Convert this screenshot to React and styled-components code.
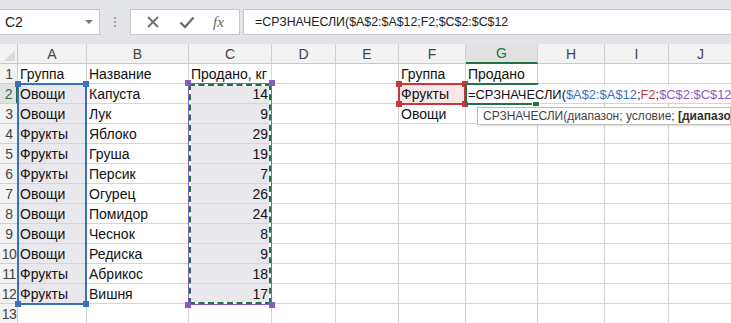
import React from 'react';
import styled, { createGlobalStyle } from 'styled-components';

////////////////////////////////////////////////////////////////////////////
const GlobalStyle = createGlobalStyle`
  html, body {
    margin: 0;
    padding: 0;
    background: #ffffff;
    overflow: hidden;
  }
  * { box-sizing: border-box; }
`;

const ROW_HEAD = 18;
const ROW_H = 20;
const COLS = [
  { key: 'A', w: 69 },
  { key: 'B', w: 102 },
  { key: 'C', w: 83 },
  { key: 'D', w: 64 },
  { key: 'E', w: 63 },
  { key: 'F', w: 67 },
  { key: 'G', w: 72 },
  { key: 'H', w: 67 },
  { key: 'I', w: 64 },
  { key: 'J', w: 64 },
];

const DATA = [
  { A: 'Группа', B: 'Название', C: 'Продано, кг', F: 'Группа', G: 'Продано' },
  { A: 'Овощи', B: 'Капуста', C: 14, F: 'Фрукты' },
  { A: 'Овощи', B: 'Лук', C: 9, F: 'Овощи' },
  { A: 'Фрукты', B: 'Яблоко', C: 29 },
  { A: 'Фрукты', B: 'Груша', C: 19 },
  { A: 'Фрукты', B: 'Персик', C: 7 },
  { A: 'Овощи', B: 'Огурец', C: 26 },
  { A: 'Овощи', B: 'Помидор', C: 24 },
  { A: 'Овощи', B: 'Чеснок', C: 8 },
  { A: 'Овощи', B: 'Редиска', C: 9 },
  { A: 'Фрукты', B: 'Абрикос', C: 18 },
  { A: 'Фрукты', B: 'Вишня', C: 17 },
  {},
];

// левый край колонки внутри листа
const colX = (key) => {
  let x = ROW_HEAD;
  for (const c of COLS) {
    if (c.key === key) return x;
    x += c.w;
  }
  return x;
};
const colW = (key) => COLS.find((c) => c.key === key).w;
const rowY = (n) => ROW_H * n; // верх строки n (0 = заголовки)

const GREEN = '#217346';
const BLUE = '#3b6fc4';
const RED = '#c9363f';
const PURPLE = '#8a5bbf';

////////////////////////////////////////////////////////////////////////////
const Page = styled.div`
  width: 731px;
  height: 323px;
  overflow: hidden;
  font-family: "Liberation Sans", Arial, sans-serif;
`;

const Toolbar = styled.div`
  height: 44px;
  background: #e2e4e7;
  display: flex;
  align-items: flex-start;
  padding-top: 9px;
`;

const NameBox = styled.div`
  width: 100px;
  height: 26px;
  background: #fff;
  border: 1px solid #c6c6c6;
  border-left: none;
  display: flex;
  align-items: center;
  justify-content: space-between;
  padding: 0 6px 0 5px;
  font-size: 14px;
  color: #222;
`;

const DropArrow = styled.span`
  width: 0;
  height: 0;
  border-left: 4px solid transparent;
  border-right: 4px solid transparent;
  border-top: 4px solid #777;
`;

const Grip = styled.div`
  width: 30px;
  height: 26px;
  display: flex;
  flex-direction: column;
  align-items: center;
  justify-content: center;
  gap: 2px;

  span {
    width: 2px;
    height: 2px;
    background: #a5a5a5;
  }
`;

const FxButtons = styled.div`
  width: 110px;
  height: 26px;
  background: #fff;
  border: 1px solid #c6c6c6;
  display: flex;
  align-items: center;
  justify-content: space-around;
  padding: 0 6px;
`;

const FxLabel = styled.span`
  font-family: "Liberation Serif", serif;
  font-style: italic;
  font-size: 15px;
  color: #666;
`;

const FormulaInput = styled.div`
  flex: 1;
  margin-left: 3px;
  height: 26px;
  background: #fff;
  border: 1px solid #c6c6c6;
  border-right: none;
  display: flex;
  align-items: center;
  padding-left: 11px;
  font-size: 12.4px;
  color: #222;
  white-space: nowrap;
`;

const Sheet = styled.div`
  position: relative;
  display: grid;
  grid-template-columns: ${ROW_HEAD}px ${COLS.map((c) => c.w + 'px').join(' ')};
  grid-auto-rows: ${ROW_H}px;
`;

const Corner = styled.div`
  position: relative;
  background: #f3f3f3;
  border-right: 1px solid #c8c8c8;
  border-bottom: 1px solid #c8c8c8;

  &::after {
    content: '';
    position: absolute;
    right: 2px;
    bottom: 2px;
    border-left: 11px solid transparent;
    border-bottom: 11px solid #dadada;
  }
`;

const ColHead = styled.div`
  background: ${(p) => (p.$active ? '#e1e1e1' : '#f3f3f3')};
  border-right: 1px solid #d0d0d0;
  border-bottom: ${(p) => (p.$active ? `2px solid ${GREEN}` : '1px solid #c8c8c8')};
  color: ${(p) => (p.$active ? GREEN : '#444')};
  font-size: 14px;
  display: flex;
  align-items: center;
  justify-content: center;
`;

const RowHead = styled.div`
  background: ${(p) => (p.$active ? '#e1e1e1' : '#f3f3f3')};
  border-right: ${(p) => (p.$active ? `2px solid ${GREEN}` : '1px solid #c8c8c8')};
  border-bottom: 1px solid #d0d0d0;
  color: ${(p) => (p.$active ? GREEN : '#444')};
  font-size: 14px;
  letter-spacing: -0.5px;
  display: flex;
  align-items: center;
  justify-content: center;
  padding-left: 1px;
`;

const Cell = styled.div`
  background: ${(p) => p.$fill || '#fff'};
  border-right: 1px solid #d4d4d4;
  border-bottom: 1px solid #d4d4d4;
  font-size: 14px;
  color: #111;
  display: flex;
  align-items: flex-end;
  justify-content: ${(p) => (p.$num ? 'flex-end' : 'flex-start')};
  padding: 0 3px 1px 2px;
  white-space: nowrap;
`;

const RangeBox = styled.div`
  position: absolute;
  border: 2px solid ${(p) => p.$color};
  pointer-events: none;
`;

const Handle = styled.span`
  position: absolute;
  width: 6px;
  height: 6px;
  background: ${(p) => p.$color};
  ${(p) => (p.$top ? 'top: -4px;' : 'bottom: -4px;')}
  ${(p) => (p.$left ? 'left: -4px;' : 'right: -4px;')}
`;

const CopyBox = styled.div`
  position: absolute;
  border: 1px solid ${PURPLE};
  pointer-events: none;
`;

const AntsBase = styled.div`
  position: absolute;
  inset: 0;
  border: 2px solid #fff;
`;

const Ants = styled.div`
  position: absolute;
  inset: 0;
  border: 2px dashed ${GREEN};
`;

const ActiveBox = styled.div`
  position: absolute;
  border: 2px solid ${GREEN};
  pointer-events: none;
  border-right-color: transparent;

  &::after {
    content: '';
    position: absolute;
    right: -3px;
    bottom: -4px;
    width: 6px;
    height: 6px;
    background: ${GREEN};
    border: 1px solid #fff;
  }
`;

const Editor = styled.div`
  position: absolute;
  height: ${ROW_H - 3}px;
  background: #fff;
  font-size: 12.9px;
  line-height: 15px;
  color: #111;
  white-space: nowrap;
  display: flex;
  align-items: flex-end;
  padding: 0 0 0 1px;
`;

const Ref = styled.span`
  color: ${(p) => p.$color || 'inherit'};
`;

const Tip = styled.div`
  position: absolute;
  height: 18px;
  background: #fff;
  border: 1px solid #bdbdbd;
  box-shadow: 1px 1px 2px rgba(0, 0, 0, 0.15);
  font-size: 12px;
  color: #444;
  white-space: nowrap;
  overflow: hidden;
  display: flex;
  align-items: center;
  padding-left: 5px;

  b { color: #333; }
`;

////////////////////////////////////////////////////////////////////////////
const Handles = ({ color }) => (
  <>
    <Handle $color={color} $top $left />
    <Handle $color={color} $top />
    <Handle $color={color} $left />
    <Handle $color={color} />
  </>
);

const cellFill = (col, row) => {
  if (row >= 2 && row <= 12 && (col === 'A' || col === 'C')) return '#e8e8ed';
  if (row === 2 && col === 'F') return '#f8e7e8';
  return null;
};

const App = () => {
  const rangeTop = rowY(2) - 1;

  return (
    <Page>
      <GlobalStyle />

      {/* строка формул ---------------------------- */}
      <Toolbar>
        <NameBox>
          C2
          <DropArrow />
        </NameBox>
        <Grip><span /><span /><span /></Grip>
        <FxButtons>
          <svg width="14" height="14" viewBox="0 0 14 14">
            <path d="M2 2 L12 12 M12 2 L2 12" stroke="#6f6f6f" strokeWidth="1.8" fill="none" />
          </svg>
          <svg width="16" height="14" viewBox="0 0 16 14">
            <path d="M1.5 7.5 L6 12 L14.5 2.5" stroke="#6f6f6f" strokeWidth="2.4" fill="none" />
          </svg>
          <FxLabel>fx</FxLabel>
        </FxButtons>
        <FormulaInput>=СРЗНАЧЕСЛИ($A$2:$A$12;F2;$C$2:$C$12</FormulaInput>
      </Toolbar>

      {/* лист ---------------------------- */}
      <Sheet>
        <Corner />
        {COLS.map((c) => (
          <ColHead key={c.key} $active={c.key === 'G'}>{c.key}</ColHead>
        ))}

        {DATA.map((row, i) => (
          <React.Fragment key={i}>
            <RowHead $active={i + 1 === 2}>{i + 1}</RowHead>
            {COLS.map((c) => (
              <Cell
                key={c.key}
                $fill={cellFill(c.key, i + 1)}
                $num={typeof row[c.key] === 'number'}
              >
                {row[c.key]}
              </Cell>
            ))}
          </React.Fragment>
        ))}

        {/* диапазон A2:A12 */}
        <RangeBox
          $color={BLUE}
          style={{ left: colX('A') - 1, top: rangeTop, width: colW('A') + 1, height: ROW_H * 11 + 2 }}
        >
          <Handles color={BLUE} />
        </RangeBox>

        {/* диапазон C2:C12 (копирование) */}
        <CopyBox
          style={{ left: colX('C') - 1, top: rangeTop, width: colW('C') + 1, height: ROW_H * 11 + 2 }}
        >
          <AntsBase />
          <Ants />
          <Handles color={PURPLE} />
        </CopyBox>

        {/* условие F2 */}
        <RangeBox
          $color={RED}
          style={{ left: colX('F') - 1, top: rangeTop, width: colW('F') + 1, height: ROW_H + 2 }}
        >
          <Handles color={RED} />
        </RangeBox>

        {/* редактирование G2 */}
        <ActiveBox
          style={{ left: colX('G') - 1, top: rangeTop, width: colW('G') + 2, height: ROW_H + 2 }}
        />
        <Editor style={{ left: colX('G') + 1, top: rowY(2) + 1, width: 731 - colX('G') }}>
          =СРЗНАЧЕСЛИ(<Ref $color={BLUE}>$A$2:$A$12</Ref>;<Ref $color={RED}>F2</Ref>;<Ref $color={PURPLE}>$C$2:$C$12</Ref>
        </Editor>

        <Tip style={{ left: colX('F') + 78, top: rowY(3) + 3, width: 731 - colX('F') - 78 }}>
          СРЗНАЧЕСЛИ(диапазон; условие;&nbsp;<b>[диапазон_усреднения])</b>
        </Tip>
      </Sheet>
    </Page>
  );
};

export default App;
